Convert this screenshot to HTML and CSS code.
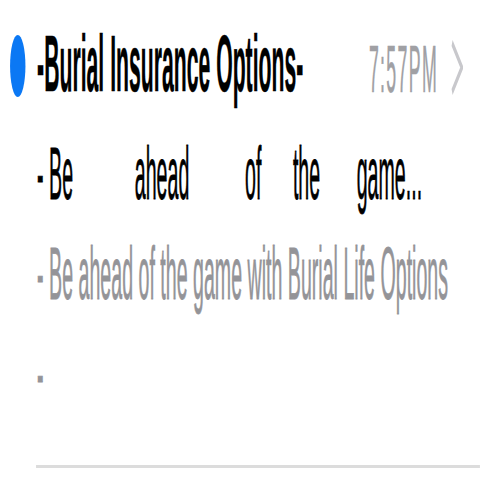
FILE: index.html
```html
<!DOCTYPE html>
<html lang="en">
<head>
<meta charset="utf-8">
<title>Mail</title>
<link rel="stylesheet" href="styles.css">
</head>
<body>
<div class="viewport">
  <div class="stage">
    <div class="mail-item">
      <div class="header">
        <span class="unread-dot"></span>
        <span class="sender">-Burial Insurance Options-</span>
        <span class="time">7:57PM</span>
        <svg class="chevron" viewBox="0 0 45 55" width="45" height="55" aria-hidden="true">
          <polyline points="4,3 41,27.5 4,52" fill="none" stroke="#c8c8cc" stroke-width="7" stroke-linejoin="miter"/>
        </svg>
      </div>
      <div class="lines">
        <div class="subject"><span>- Be</span><span class="g1">ahead</span><span class="g2">of</span><span class="g3">the</span><span class="g4">game...</span></div>
        <div class="preview">- Be ahead of the game with Burial Life Options</div>
        <div class="preview">-</div>
      </div>
      <div class="separator"></div>
    </div>
  </div>
</div>
</body>
</html>
```

FILE: styles.css
```css
html, body {
  margin: 0;
  padding: 0;
  background: #ffffff;
  overflow: hidden;
}

.viewport {
  width: 480px;
  height: 480px;
  overflow: hidden;
}

.stage {
  width: 1811px;
  transform: scaleX(0.265);
  transform-origin: 0 0;
  font-family: "Liberation Sans", Arial, sans-serif;
}

.header {
  display: flex;
  align-items: flex-start;
  padding: 24px 64px 0 38px;
}

.unread-dot {
  width: 58px;
  height: 62px;
  margin-top: 11px;
  border-radius: 50%;
  background: #0b78f4;
  flex: none;
}

.sender {
  margin-left: 44px;
  font-size: 80px;
  line-height: 80px;
  font-weight: 700;
  color: #000000;
  white-space: nowrap;
  -webkit-text-stroke: 0.5px #000000;
}

.time {
  margin-left: auto;
  margin-top: 11px;
  font-size: 67px;
  line-height: 67px;
  letter-spacing: 5px;
  color: #a0a0a4;
  white-space: nowrap;
  -webkit-text-stroke: 0.6px #a0a0a4;
}

.chevron {
  margin-left: 49px;
  margin-top: 16px;
  flex: none;
}

.lines {
  margin-top: 20px;
  padding-left: 140px;
  font-size: 74px;
  line-height: 100px;
}

.subject {
  display: flex;
  color: #000000;
  white-space: nowrap;
  -webkit-text-stroke: 0.8px #000000;
}

.subject .g1 { margin-left: 233px; }
.subject .g2 { margin-left: 210px; }
.subject .g3 { margin-left: 119px; }
.subject .g4 { margin-left: 138px; }

.preview {
  color: #949498;
  white-space: nowrap;
  -webkit-text-stroke: 0.8px #949498;
}

.separator {
  margin: 41px 0 0 136px;
  height: 3px;
  background: #dcdcdc;
}
```
